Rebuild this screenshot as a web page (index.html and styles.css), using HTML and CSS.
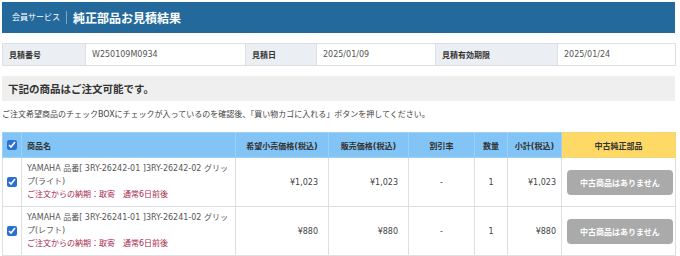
FILE: index.html
```html
<!DOCTYPE html>
<html lang="ja">
<head>
  <meta charset="UTF-8">
  <meta name="viewport" content="width=device-width, initial-scale=1.0">
  <title>純正部品お見積結果</title>
  <link rel="stylesheet" href="styles.css">
</head>
<body>
  <div class="page">
    <div class="page-header">
      <span class="service">会員サービス</span>
      <h1>純正部品お見積結果</h1>
    </div>

    <table class="info">
      <colgroup>
        <col style="width:83px"><col style="width:160px"><col style="width:71px">
        <col style="width:119px"><col style="width:122px"><col style="width:118px">
      </colgroup>
      <tr>
        <th>見積番号</th><td>W250109M0934</td>
        <th>見積日</th><td>2025/01/09</td>
        <th>見積有効期限</th><td>2025/01/24</td>
      </tr>
    </table>

    <h2 class="section-title">下記の商品はご注文可能です。</h2>
    <p class="note">ご注文希望商品のチェックBOXにチェックが入っているのを確認後、「買い物カゴに入れる」ボタンを押してください。</p>

    <table class="items">
      <colgroup>
        <col style="width:19px"><col style="width:214px"><col style="width:93px"><col style="width:80px">
        <col style="width:66px"><col style="width:33px"><col style="width:54px"><col style="width:114px">
      </colgroup>
      <thead>
        <tr>
          <th class="check"><input type="checkbox" checked></th>
          <th class="name">商品名</th>
          <th>希望小売価格(税込)</th>
          <th>販売価格(税込)</th>
          <th>割引率</th>
          <th>数量</th>
          <th>小計(税込)</th>
          <th class="used">中古純正部品</th>
        </tr>
      </thead>
      <tbody>
        <tr>
          <td class="check"><input type="checkbox" checked></td>
          <td class="name">YAMAHA 品番[ 3RY-26242-01 ]3RY-26242-02 グリップ(ライト)<br><span class="delivery">ご注文からの納期：取寄　通常6日前後</span></td>
          <td class="price">¥1,023</td>
          <td class="price">¥1,023</td>
          <td class="center">-</td>
          <td class="center">1</td>
          <td class="subtotal">¥1,023</td>
          <td class="used-cell"><button class="no-used" disabled>中古商品はありません</button></td>
        </tr>
        <tr>
          <td class="check"><input type="checkbox" checked></td>
          <td class="name">YAMAHA 品番[ 3RY-26241-01 ]3RY-26241-02 グリップ(レフト)<br><span class="delivery">ご注文からの納期：取寄　通常6日前後</span></td>
          <td class="price">¥880</td>
          <td class="price">¥880</td>
          <td class="center">-</td>
          <td class="center">1</td>
          <td class="subtotal">¥880</td>
          <td class="used-cell"><button class="no-used" disabled>中古商品はありません</button></td>
        </tr>
      </tbody>
    </table>
  </div>
</body>
</html>
```

FILE: styles.css
```css
:root {
  --navy: #23699b;
  --label-bg: #ebeef2;
  --border: #dcdfe3;
  --head-blue: #82c4f6;
  --head-yellow: #ffd966;
  --text: #333;
  --red: #a8294f;
}

* {
  margin: 0;
  padding: 0;
  box-sizing: border-box;
}

body {
  font-family: "DejaVu Sans", "Noto Sans CJK JP", sans-serif;
  font-size: 8px;
  color: var(--text);
  background: #fff;
  padding: 2px;
}

.page {
  width: 673px;
}

.page-header {
  height: 31px;
  background: var(--navy);
  color: #fff;
  display: flex;
  align-items: center;
  padding-left: 10px;
}

.service {
  font-size: 8px;
  padding-right: 6px;
  border-right: 1px solid #7ea6c4;
  line-height: 13px;
}

.page-header h1 {
  font-size: 12px;
  font-weight: 700;
  margin-left: 6px;
}

table {
  width: 673px;
  border-collapse: collapse;
  table-layout: fixed;
}

.info {
  margin-top: 10px;
}

.info th,
.info td {
  height: 22px;
  border: 1px solid var(--border);
  text-align: left;
  font-weight: 400;
  padding: 0 6px;
}

.info th {
  background: var(--label-bg);
  font-weight: 700;
}

.info td {
  color: #555;
}

.section-title {
  margin-top: 10px;
  height: 25px;
  background: #efefef;
  font-size: 10.5px;
  font-weight: 700;
  display: flex;
  align-items: center;
  padding-left: 6px;
}

.note {
  margin-top: 9px;
  line-height: 10px;
  color: #444;
}

.items {
  margin-top: 12px;
}

.items th,
.items td {
  border: 1px solid var(--border);
}

.items th {
  height: 25px;
  background: var(--head-blue);
  font-weight: 700;
  text-align: center;
  border-color: #9dd0f6;
}

.items th.used {
  background: var(--head-yellow);
  border-color: #f2d67a;
}

.items th.name {
  text-align: left;
  padding-left: 5px;
}

.items td {
  height: 48px;
  color: #444;
}

.check {
  text-align: center;
}

.check input {
  width: 10px;
  height: 10px;
  accent-color: #2a6fd1;
  vertical-align: middle;
}

td.name {
  padding: 4px 5px 5px;
  line-height: 13px;
  color: #555;
}

.delivery {
  color: var(--red);
}

td.price {
  text-align: right;
  padding-right: 10px;
}

td.subtotal {
  text-align: right;
  padding-right: 5px;
}

td.center {
  text-align: center;
}

.used-cell {
  padding: 0 3px 0 5px;
}

.no-used {
  width: 106px;
  height: 25px;
  border: none;
  border-radius: 4px;
  background: #aaa;
  color: #fff;
  font-family: inherit;
  font-size: 8px;
  font-weight: 700;
}
```
